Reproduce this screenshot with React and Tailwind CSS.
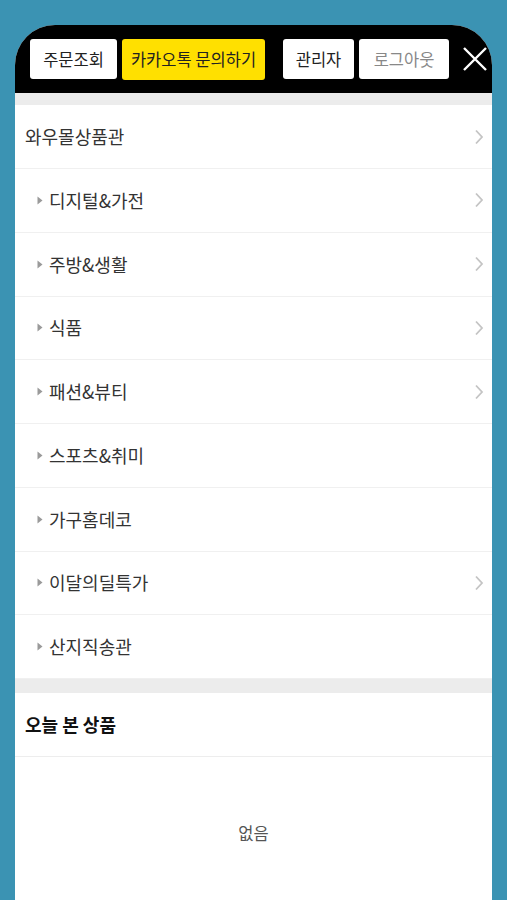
import React from 'react';

const categories = [
  { name: '디지털&가전', arrow: true },
  { name: '주방&생활', arrow: true },
  { name: '식품', arrow: true },
  { name: '패션&뷰티', arrow: true },
  { name: '스포츠&취미', arrow: false },
  { name: '가구홈데코', arrow: false },
  { name: '이달의딜특가', arrow: true },
  { name: '산지직송관', arrow: false },
];

const font = { fontFamily: '"Noto Sans CJK KR", "Noto Sans", sans-serif' };

const Chevron = () => (
  <svg width="10" height="16" viewBox="0 0 10 16" className="shrink-0">
    <path d="M2 1.5 L8 8 L2 14.5" fill="none" stroke="#c4c4c4" strokeWidth="1.8" />
  </svg>
);

const Triangle = () => (
  <svg width="6" height="9" viewBox="0 0 6 9" className="shrink-0">
    <path d="M0.5 0.5 L5.5 4.5 L0.5 8.5 Z" fill="#9a9a9a" />
  </svg>
);

const App = () => {
  return (
    <div className="w-[507px] h-[900px] overflow-hidden bg-[#3b93b3] pt-[25px] px-[15px]" style={font}>
      <div className="w-[477px] h-[875px] bg-white rounded-t-[40px] overflow-hidden flex flex-col">
        {/* header */}
        <div className="h-[68px] bg-black flex items-center pl-[15px] shrink-0">
          <button className="h-[40px] w-[87px] bg-white rounded-[3px] text-[16.5px] text-[#222]">주문조회</button>
          <button className="h-[41px] w-[143px] ml-[5px] bg-[#ffe000] rounded-[3px] text-[16.5px] text-[#222]">카카오톡 문의하기</button>
          <button className="h-[40px] w-[71px] ml-[18px] bg-white rounded-[3px] text-[16.5px] text-[#222]">관리자</button>
          <button className="h-[40px] w-[90px] ml-[5px] bg-white rounded-[3px] text-[16.5px] text-[#888]">로그아웃</button>
          <svg width="24" height="24" viewBox="0 0 24 24" className="ml-[14px] shrink-0">
            <path d="M1 1 L23 23 M23 1 L1 23" stroke="#fff" strokeWidth="2.4" />
          </svg>
        </div>

        <div className="h-[12px] bg-[#ececec] shrink-0" />

        {/* main category */}
        <div className="h-[64px] flex items-center justify-between pl-[10px] pr-[8px] border-b border-[#f0f0f0] shrink-0">
          <span className="text-[18px] text-[#333]">와우몰상품관</span>
          <Chevron />
        </div>

        {categories.map((c) => (
          <div key={c.name} className="h-[63.75px] flex items-center justify-between pl-[22px] pr-[8px] border-b border-[#f0f0f0] shrink-0">
            <div className="flex items-center gap-[6px]">
              <Triangle />
              <span className="text-[18px] text-[#333]">{c.name}</span>
            </div>
            {c.arrow && <Chevron />}
          </div>
        ))}

        <div className="h-[14px] bg-[#ececec] shrink-0" />

        <div className="h-[64px] flex items-center pl-[10px] border-b border-[#ededed] shrink-0">
          <span className="text-[18px] font-bold text-[#111]">오늘 본 상품</span>
        </div>

        <div className="h-[152px] flex items-center justify-center shrink-0">
          <span className="text-[16.5px] text-[#555]">없음</span>
        </div>
      </div>
    </div>
  );
};

export default App;
